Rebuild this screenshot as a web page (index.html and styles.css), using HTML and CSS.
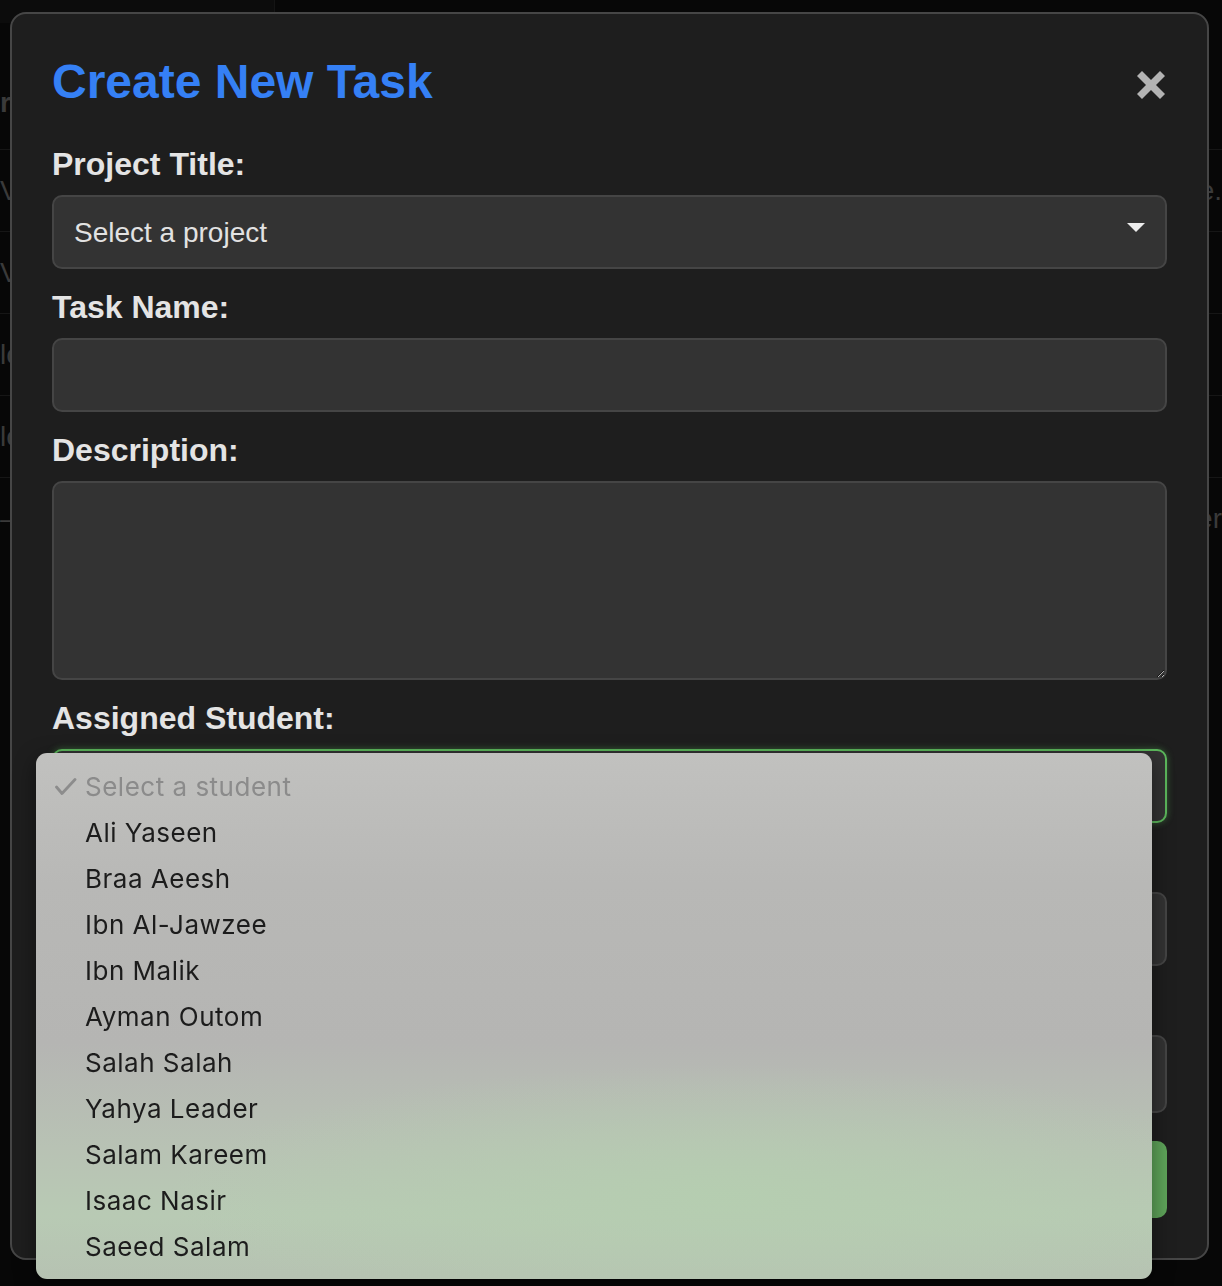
FILE: index.html
```html
<!DOCTYPE html>
<html lang="en">
<head>
<meta charset="utf-8">
<title>Create New Task</title>
<link rel="stylesheet" href="styles.css">
</head>
<body>
<div class="page">
  <div class="topbar"><div class="tb-left"></div><div class="tb-right"></div></div>
  <div class="bgtable">
    <div class="bgrow head"><span class="cell-l">r</span><span class="cell-r"></span></div>
    <div class="bgrow"><span class="cell-l">Ve</span><span class="cell-r">Active.</span></div>
    <div class="bgrow"><span class="cell-l">Ve</span><span class="cell-r"></span></div>
    <div class="bgrow"><span class="cell-l">lo</span><span class="cell-r"></span></div>
    <div class="bgrow"><span class="cell-l">lo</span><span class="cell-r"></span></div>
    <div class="bgrow last"><span class="cell-l">—</span><span class="cell-r">Teacher</span></div>
  </div>
</div>

<div class="modal">
  <div class="modal-head">
    <h2 class="modal-title">Create New Task</h2>
    <svg class="close" width="28" height="28" viewBox="0 0 28 28" aria-label="Close">
      <line x1="2.5" y1="2.5" x2="25.5" y2="25.5" stroke="#b3b3b3" stroke-width="7"/>
      <line x1="25.5" y1="2.5" x2="2.5" y2="25.5" stroke="#b3b3b3" stroke-width="7"/>
    </svg>
  </div>

  <div class="group">
    <label class="label">Project Title:</label>
    <div class="select-wrap">
      <select class="control select"><option>Select a project</option></select>
    </div>
  </div>

  <div class="group">
    <label class="label">Task Name:</label>
    <input class="control" type="text">
  </div>

  <div class="group">
    <label class="label">Description:</label>
    <textarea class="control textarea"></textarea>
  </div>

  <div class="group">
    <label class="label">Assigned Student:</label>
    <div class="select-wrap">
      <select class="control select focused"><option>Select a student</option></select>
      <div class="dropdown">
        <div class="opt disabled">
          <svg class="check" width="22" height="18" viewBox="0 0 22 18"><polyline points="1.5,9 7,15.5 20,1.5" fill="none" stroke="#8c8c8c" stroke-width="2.8" stroke-linecap="round" stroke-linejoin="round"/></svg>
          Select a student
        </div>
        <div class="opt">Ali Yaseen</div>
        <div class="opt">Braa Aeesh</div>
        <div class="opt">Ibn Al-Jawzee</div>
        <div class="opt">Ibn Malik</div>
        <div class="opt">Ayman Outom</div>
        <div class="opt">Salah Salah</div>
        <div class="opt">Yahya Leader</div>
        <div class="opt">Salam Kareem</div>
        <div class="opt">Isaac Nasir</div>
        <div class="opt">Saeed Salam</div>
      </div>
    </div>
  </div>

  <div class="group">
    <label class="label">Status:</label>
    <div class="select-wrap">
      <select class="control select"><option>Pending</option></select>
    </div>
  </div>

  <div class="group last">
    <label class="label">Due Date:</label>
    <input class="control date" type="text">
  </div>

  <button class="submit" type="button">Create Task</button>
</div>
</body>
</html>
```

FILE: styles.css
```css
html, body {
  margin: 0;
  padding: 0;
}

body {
  background: #070707;
  font-family: "Liberation Sans", Arial, sans-serif;
  width: 1222px;
  height: 1286px;
  overflow: hidden;
}

/* background page */
.topbar {
  display: flex;
  height: 23px;
}
.tb-left {
  width: 274px;
  background: #0c0c0c;
  border-right: 1px solid #141414;
}
.tb-right {
  flex: 1;
}

.bgtable {
  display: flex;
  flex-direction: column;
}
.bgrow {
  height: 82px;
  box-sizing: border-box;
  border-bottom: 1px solid #161616;
  display: flex;
  align-items: center;
  justify-content: space-between;
  font-size: 28px;
  color: #3a3a3a;
  white-space: nowrap;
  overflow: hidden;
}
.bgrow.head {
  height: 127px;
  align-items: flex-start;
  padding-top: 64px;
  font-weight: 700;
}
.bgrow.last {
  border-bottom: none;
}

/* modal */
.modal {
  position: fixed;
  top: 12px;
  left: 10px;
  width: 1199px;
  box-sizing: border-box;
  background: #1e1e1e;
  border: 2px solid #464646;
  border-radius: 16px;
  padding: 40px;
}

.modal-head {
  display: flex;
  justify-content: space-between;
  align-items: center;
  margin-bottom: 37px;
}
.modal-title {
  margin: 0;
  font-size: 48px;
  line-height: 55px;
  font-weight: 700;
  color: #3580f5;
}
.close {
  display: block;
  margin-top: 7px;
  margin-right: 2px;
}

.group {
  margin-bottom: 20px;
}
.group.last {
  margin-bottom: 28px;
}

.label {
  display: block;
  font-size: 32px;
  line-height: 37px;
  font-weight: 700;
  color: #e4e4e4;
  margin-bottom: 12px;
}

.control {
  display: block;
  width: 100%;
  height: 74px;
  box-sizing: border-box;
  background: #333333;
  border: 2px solid #454545;
  border-radius: 10px;
  color: #e2e2e2;
  font-family: "Liberation Sans", Arial, sans-serif;
  font-size: 28px;
  padding: 0 20px;
  margin: 0;
  outline: none;
}
.select {
  appearance: none;
  -webkit-appearance: none;
}
.textarea {
  height: 199px;
  resize: vertical;
  padding: 14px 20px;
}
.date {
  height: 78px;
}
.focused {
  border-color: #5cb85c;
  box-shadow: 0 0 7px rgba(92, 184, 92, 0.45);
}

.select-wrap {
  position: relative;
}
.select-wrap::after {
  content: "";
  position: absolute;
  right: 22px;
  top: 28px;
  border-left: 9px solid transparent;
  border-right: 9px solid transparent;
  border-top: 9px solid #ececec;
  pointer-events: none;
}

.submit {
  display: block;
  width: 100%;
  height: 77px;
  border: none;
  border-radius: 10px;
  background: #5fa55a;
  color: #ffffff;
  font-family: "Liberation Sans", Arial, sans-serif;
  font-size: 28px;
  font-weight: 700;
}

/* native-like select popup */
.dropdown {
  position: absolute;
  left: -16px;
  top: 4px;
  width: 1116px;
  height: 526px;
  box-sizing: border-box;
  padding: 11px 0 9px;
  border-radius: 11px;
  z-index: 10;
  background:
    radial-gradient(ellipse 560px 130px at 62% 84%, rgba(181, 206, 176, 0.9), rgba(181, 206, 176, 0) 100%),
    linear-gradient(to bottom, #c1c1bf 0%, #b8b8b6 25%, #b5b5b3 55%, #b8c2b4 75%, #b8cab4 88%, #b6c2b2 100%);
  box-shadow: 0 6px 22px rgba(0, 0, 0, 0.45);
  font-family: Inter, "Noto Sans", sans-serif;
  font-size: 26px;
  letter-spacing: 0.5px;
  color: #1c1c1c;
}
.opt {
  position: relative;
  height: 46px;
  line-height: 46px;
  padding-left: 49px;
  white-space: nowrap;
}
.opt.disabled {
  color: #8b8b8b;
}
.check {
  position: absolute;
  left: 19px;
  top: 14px;
}
```
